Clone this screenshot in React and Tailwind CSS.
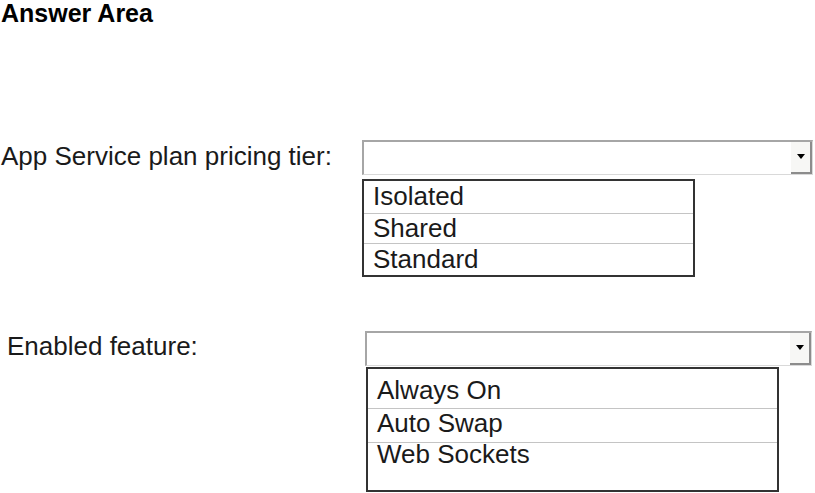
import React from 'react';

const font = { fontFamily: '"Liberation Sans", Arial, sans-serif' };

const Select = ({ width }) => (
  <div
    className="flex h-[35px] border-t-2 border-l-2 border-t-[#a6a6a6] border-l-[#a6a6a6] border-r border-b border-r-[#d9d9d9] border-b-[#d9d9d9] bg-white"
    style={{ width }}
  >
    <div className="flex-1" />
    <div className="flex w-[21px] items-center justify-center border-r-2 border-b-2 border-[#8c8c8c] bg-[#f7f7f5]">
      <div className="mb-[2px] h-0 w-0 border-l-[4px] border-r-[4px] border-t-[5px] border-l-transparent border-r-transparent border-t-black" />
    </div>
  </div>
);

const ListBox = ({ width, rows, className = '' }) => (
  <div className={`border-2 border-[#333] bg-white ${className}`} style={{ width }}>
    {rows.map((r, i) => (
      <div
        key={r.label}
        className={`pl-[9px] text-[26px] text-[#1a1a1a] ${i > 0 ? 'border-t border-[#c4c4c4]' : ''}`}
        style={{ height: r.h, paddingTop: r.pt, lineHeight: r.lh }}
      >
        {r.label}
      </div>
    ))}
  </div>
);

export default function App() {
  return (
    <div className="h-[493px] w-[815px] overflow-hidden bg-white" style={font}>
      <h1 className="pl-[1px] text-[25px] font-bold leading-[26px] text-black">
        Answer Area
      </h1>

      <div className="mt-[114px] flex">
        <div className="w-[362px] pl-[1px] text-[26px] leading-[32px] text-[#1a1a1a]">
          App Service plan pricing tier:
        </div>
        <div>
          <Select width={451} />
          <ListBox
            width={333}
            className="mt-[4px]"
            rows={[
              { label: 'Isolated', h: 32, pt: 0, lh: '31px' },
              { label: 'Shared', h: 30, pt: 0, lh: '28px' },
              { label: 'Standard', h: 32, pt: 0, lh: '30px' },
            ]}
          />
        </div>
      </div>

      <div className="mt-[54px] flex">
        <div className="w-[365px] pl-[7px] text-[26px] leading-[30px] text-[#1a1a1a]">
          Enabled feature:
        </div>
        <div>
          <Select width={447} />
          <ListBox
            width={413}
            className="ml-[1px] mt-[1px]"
            rows={[
              { label: 'Always On', h: 39, pt: 8, lh: '27px' },
              { label: 'Auto Swap', h: 34, pt: 1, lh: '27px' },
              { label: 'Web Sockets', h: 48, pt: 0, lh: '23px' },
            ]}
          />
        </div>
      </div>
    </div>
  );
}
